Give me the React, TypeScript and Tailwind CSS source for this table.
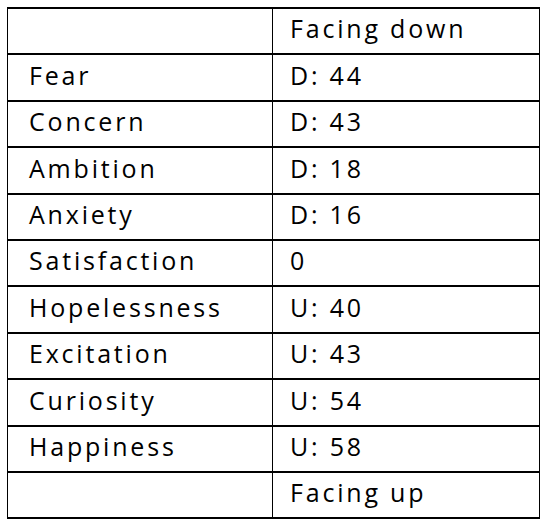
const rows: [string, string][] = [
  ['', 'Facing down'],
  ['Fear', 'D: 44'],
  ['Concern', 'D: 43'],
  ['Ambition', 'D: 18'],
  ['Anxiety', 'D: 16'],
  ['Satisfaction', '0'],
  ['Hopelessness', 'U: 40'],
  ['Excitation', 'U: 43'],
  ['Curiosity', 'U: 54'],
  ['Happiness', 'U: 58'],
  ['', 'Facing up'],
]

export default function App() {
  return (
    <div className="w-[553px] h-[527px] bg-white pl-[7px] pt-[7px] font-['Open_Sans',sans-serif] text-[25px] font-medium tracking-[2.8px] text-black">
      <div className="w-[533px] border-t-2 border-x border-black">
        {rows.map(([name, value], i) => (
          <div key={i} className="grid grid-cols-[265px_266px] h-[46.4px] border-b-2 border-black">
            <div className="border-r border-black pl-[21px] pb-[4px] flex items-center">{name}</div>
            <div className="pl-[17px] pb-[4px] flex items-center">{value}</div>
          </div>
        ))}
      </div>
    </div>
  )
}
